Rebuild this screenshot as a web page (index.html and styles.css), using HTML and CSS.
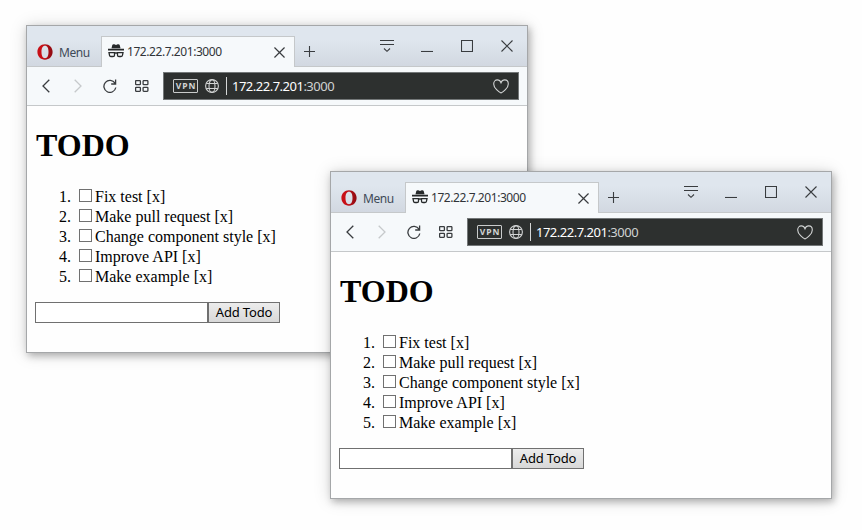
FILE: index.html
```
<!DOCTYPE html>
<html lang="en">
<head>
<meta charset="utf-8">
<title>TODO</title>
<link rel="stylesheet" href="styles.css">
</head>
<body>
<svg class="sprite" aria-hidden="true">
  <defs>
    <linearGradient id="opera-red" x1="0" x2="1" y1="0" y2="0"><stop offset="0.3" stop-color="#c80f16"/><stop offset="1" stop-color="#8e0b12"/></linearGradient>
  </defs>
  <symbol id="opera" viewBox="0 0 16 16"><path fill="url(#opera-red)" fill-rule="evenodd" d="M8 .3C3.6.3.4 3.600.4 8S3.600 15.700 8 15.700 15.600 12.400 15.600 8 12.400.3 8 .3ZM8 1.800C10.400 1.800 11.500 4.300 11.500 8S10.400 14.200 8 14.200 4.500 11.700 4.500 8 5.600 1.800 8 1.800Z"/></symbol>
  <symbol id="spy" viewBox="0 0 16 14"><path fill="#26292a" d="M3.500 4.200 4.300 1Q4.700 0 6.300.3L8 .9 9.700.3Q11.300 0 11.700 1L12.500 4.200ZM0 4.700H16V6.500H0Z"/><path fill="none" stroke="#26292a" stroke-width="1.300" d="M1 8.600H6.500V11.300Q6.500 12.500 5 12.500H3Q1.500 12.500 1.500 11ZM9.500 8.600H15L14.500 11Q14.500 12.500 13 12.500H11Q9.500 12.500 9.500 11.300ZM6.500 9H9.500"/></symbol>
  <symbol id="cross" viewBox="0 0 12 12"><path d="M.5.5 11.500 11.500M11.500.5.5 11.500"/></symbol>
  <symbol id="plus" viewBox="0 0 11 11"><path d="M5.500 0V11M0 5.500H11"/></symbol>
  <symbol id="tabs" viewBox="0 0 14 13"><path d="M0 .5H14M0 4.500H14M4 8.500 7 11.300 10 8.500"/></symbol>
  <symbol id="minimize" viewBox="0 0 12 12"><path d="M0 11.500H12"/></symbol>
  <symbol id="maximize" viewBox="0 0 12 12"><path d="M.5.5H11.500V11.500H.5Z"/></symbol>
  <symbol id="back" viewBox="0 0 8 14"><path d="M7.300.7 1 7 7.300 13.300"/></symbol>
  <symbol id="forward" viewBox="0 0 8 14"><path d="M.7.7 7 7 .7 13.300"/></symbol>
  <symbol id="reload" viewBox="0 0 14 14"><path d="M12.800 8.500A6 6 0 1 1 12 4.200M12.600.5V5H8.200"/></symbol>
  <symbol id="grid" viewBox="0 0 14 12"><rect x=".6" y=".6" width="4.800" height="4" rx=".7"/><rect x="8.100" y=".6" width="4.800" height="4" rx=".7"/><rect x=".6" y="7.300" width="4.800" height="4" rx=".7"/><rect x="8.100" y="7.300" width="4.800" height="4" rx=".7"/></symbol>
  <symbol id="globe" viewBox="0 0 14 14"><circle cx="7" cy="7" r="6.400"/><ellipse cx="7" cy="7" rx="3" ry="6.400"/><path d="M1.300 4.500H12.700M1.300 9.500H12.700"/></symbol>
  <symbol id="heart" viewBox="0 0 16 15"><path d="M8 13.900C6 13.100.7 9.200.7 4.900.7 2.500 2.300.9 4.300.9 6.200.9 7.400 2.100 8 3.700 8.600 2.100 9.800.9 11.700.9 13.700.9 15.300 2.500 15.300 4.900 15.300 9.200 10 13.100 8 13.900Z"/></symbol>
</svg>

<main class="desktop">
  <section class="window window-back">
    <header class="titlebar">
      <div class="menu"><svg class="opera"><use href="#opera"/></svg><span>Menu</span></div>
      <div class="tab"><svg class="spy"><use href="#spy"/></svg><span class="tab-title">172.22.7.201:3000</span><svg class="icon tab-close"><use href="#cross"/></svg></div>
      <svg class="icon new-tab"><use href="#plus"/></svg>
      <div class="controls"><svg class="icon tabs"><use href="#tabs"/></svg><svg class="icon"><use href="#minimize"/></svg><svg class="icon"><use href="#maximize"/></svg><svg class="icon"><use href="#cross"/></svg></div>
    </header>
    <nav class="toolbar">
      <svg class="icon nav arrow"><use href="#back"/></svg>
      <svg class="icon nav arrow disabled"><use href="#forward"/></svg>
      <svg class="icon nav reload"><use href="#reload"/></svg>
      <svg class="icon nav grid"><use href="#grid"/></svg>
      <div class="address"><span class="vpn">VPN</span><svg class="icon light globe"><use href="#globe"/></svg><span class="divider"></span><span class="url">172.22.7.201<span class="port">:3000</span></span><svg class="icon light heart"><use href="#heart"/></svg></div>
    </nav>
    <article class="page">
      <h1>TODO</h1>
      <ol>
        <li><input type="checkbox">Fix test [x]</li>
        <li><input type="checkbox">Make pull request [x]</li>
        <li><input type="checkbox">Change component style [x]</li>
        <li><input type="checkbox">Improve API [x]</li>
        <li><input type="checkbox">Make example [x]</li>
      </ol>
      <form><input class="field" type="text"><button type="button">Add Todo</button></form>
    </article>
  </section>

  <section class="window window-front">
    <header class="titlebar">
      <div class="menu"><svg class="opera"><use href="#opera"/></svg><span>Menu</span></div>
      <div class="tab"><svg class="spy"><use href="#spy"/></svg><span class="tab-title">172.22.7.201:3000</span><svg class="icon tab-close"><use href="#cross"/></svg></div>
      <svg class="icon new-tab"><use href="#plus"/></svg>
      <div class="controls"><svg class="icon tabs"><use href="#tabs"/></svg><svg class="icon"><use href="#minimize"/></svg><svg class="icon"><use href="#maximize"/></svg><svg class="icon"><use href="#cross"/></svg></div>
    </header>
    <nav class="toolbar">
      <svg class="icon nav arrow"><use href="#back"/></svg>
      <svg class="icon nav arrow disabled"><use href="#forward"/></svg>
      <svg class="icon nav reload"><use href="#reload"/></svg>
      <svg class="icon nav grid"><use href="#grid"/></svg>
      <div class="address"><span class="vpn">VPN</span><svg class="icon light globe"><use href="#globe"/></svg><span class="divider"></span><span class="url">172.22.7.201<span class="port">:3000</span></span><svg class="icon light heart"><use href="#heart"/></svg></div>
    </nav>
    <article class="page">
      <h1>TODO</h1>
      <ol>
        <li><input type="checkbox">Fix test [x]</li>
        <li><input type="checkbox">Make pull request [x]</li>
        <li><input type="checkbox">Change component style [x]</li>
        <li><input type="checkbox">Improve API [x]</li>
        <li><input type="checkbox">Make example [x]</li>
      </ol>
      <form><input class="field" type="text"><button type="button">Add Todo</button></form>
    </article>
  </section>
</main>
</body>
</html>
```
FILE: styles.css
```
* { box-sizing: border-box; }
body { margin: 0; background: #fefefe; font-family: "Liberation Serif", serif; color: #000; }
svg { display: block; flex: none; }
.sprite { position: absolute; width: 0; height: 0; }
.desktop { position: relative; width: 862px; height: 530px; overflow: hidden; }

.window {
  position: absolute;
  width: 502px;
  height: 328px;
  border: 1px solid #a5a7a9;
  background: #fefefe;
  box-shadow: 2px 3px 7px rgba(0, 0, 0, .25), 0 1px 16px rgba(0, 0, 0, .15);
}
.window-back { left: 26px; top: 25px; }
.window-front { left: 330px; top: 171px; }

.titlebar {
  display: flex;
  height: 41px;
  border-bottom: 1px solid #c5c8ca;
  background: linear-gradient(#dfe6ee 35%, #d2d8e1);
  font: 12px/16px "Noto Sans", sans-serif;
}
.menu { display: flex; align-items: center; width: 74px; padding: 12px 0 0 10px; color: #404a57; }
.menu span { padding-top: 2px; letter-spacing: -.4px; }
.opera { width: 16px; height: 16px; margin-right: 6px; }
.tab {
  display: flex;
  align-items: center;
  width: 194px;
  height: 31px;
  margin-top: 10px;
  padding: 0 9px 0 6px;
  border: 1px solid #c5c8ca;
  border-bottom: 0;
  background: #f6f9fb;
  color: #303438;
}
.spy { width: 16px; height: 14px; margin: 0 3px 2px 0; }
.tab-title { letter-spacing: -.44px; }
.icon { width: 12px; height: 12px; fill: none; stroke: #393c3f; stroke-width: 1.1; }
.tab-close { width: 11px; height: 11px; margin-left: auto; stroke-width: 1.3; }
.new-tab { width: 11px; height: 11px; margin: 20px 0 0 9px; }
.controls { display: flex; gap: 28px; margin: 14px 14px 0 auto; }
.tabs { width: 14px; height: 13px; margin-right: -1px; }

.toolbar { display: flex; align-items: center; height: 39px; padding: 0 8px 0 15px; border-bottom: 1px solid #c5c8ca; background: #f6f9fb; }
.nav { stroke-width: 1.3; }
.arrow { width: 8px; height: 14px; margin-right: 24px; }
.disabled { stroke: #c6c9cb; margin-right: 21px; }
.reload { width: 14px; height: 14px; margin-right: 18px; }
.grid { width: 14px; height: 12px; margin-right: 14px; }
.address { display: flex; flex: 1; align-items: center; height: 28px; padding: 0 9px; border: 1px solid #737778; background: #2d302f; }
.light { stroke: #d2d4d4; }
.vpn { width: 25px; height: 14px; border: 1px solid #c9cbcb; border-radius: 1px; color: #d2d4d4; font: bold 8.5px/12px "Noto Sans", sans-serif; letter-spacing: .9px; text-align: center; text-indent: 1px; }
.globe { width: 14px; height: 14px; margin-left: 7px; }
.divider { width: 1px; height: 18px; margin: 0 5px 0 7px; background: #d5d7d7; }
.url { color: #fff; font: 13px/18px "Noto Sans", sans-serif; letter-spacing: -.5px; }
.port { color: #d0d2d2; }
.heart { width: 16px; height: 15px; margin-left: auto; }

.page { padding: 21px 8px 0; font-size: 16px; }
h1 { margin: 0; padding-left: 1px; font-size: 32px; line-height: 37px; }
ol { margin: 23px 0 15px; padding-left: 40px; }
li { height: 20px; line-height: 20px; }
li input { appearance: none; width: 13px; height: 13px; margin: 0 3px 0 4px; border: 1px solid #707070; background: #fff; vertical-align: 0; }
form { display: flex; }
.field { width: 173px; height: 21px; padding: 1px; border: 1px solid #707070; background: #fff; }
button { width: 72px; height: 21px; padding: 0 0 1px; border: 1px solid #707070; background: linear-gradient(#ececec, #d8d8d8); color: #000; font: 13px/18px "Noto Sans", sans-serif; letter-spacing: -.15px; }
```
